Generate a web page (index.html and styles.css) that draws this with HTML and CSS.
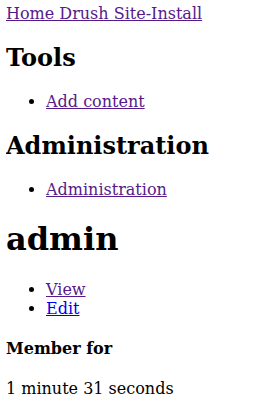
FILE: index.html
```html
<!DOCTYPE html>
<html>
<head>
    <title>admin | Drush Site-Install</title>
    <meta charset="utf-8">
    <link rel="stylesheet" href="styles.css">
</head>
<body>
    <div class="site-branding">
        <a href="#" class="visited">Home Drush Site-Install</a>
    </div>

    <!-- Tools menu -->
    <h2>Tools</h2>
    <ul>
        <li><a href="#" class="visited">Add content</a></li>
    </ul>

    <!-- Admin menu -->
    <h2>Administration</h2>
    <ul>
        <li><a href="#" class="visited">Administration</a></li>
    </ul>

    <h1>admin</h1>
    <ul>
        <li><a href="#" class="visited">View</a></li>
        <li><a href="#">Edit</a></li>
    </ul>

    <h4>Member for</h4>
    <p>1 minute 31 seconds</p>
</body>
</html>
```

FILE: styles.css
```css
body {
    font-family: "DejaVu Serif", serif;
    color: #000;
    margin: 4px 6px 8px;
}

a {
    color: #0000ee;
}

a.visited {
    color: #551a8b;
}
```
